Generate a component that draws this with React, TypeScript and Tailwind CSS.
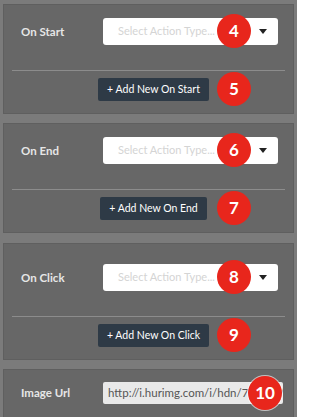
const font = { fontFamily: "Lato, 'Open Sans', sans-serif" };

function Badge({ n, className }: { n: number; className: string }) {
  return (
    <span
      className={`absolute flex h-[34px] w-[34px] items-center justify-center rounded-full bg-[#e8261c] text-[17px] font-bold text-white ${className}`}
    >
      {n}
    </span>
  );
}

function SelectBox() {
  return (
    <div className="flex h-[27px] w-[175px] items-center justify-between rounded-[3px] bg-white pl-[15px] pr-[11px]">
      <span className="text-[11px] text-[#d4d4d4]">Select Action Type...</span>
      <svg width="8" height="5" viewBox="0 0 8 5" className="shrink-0">
        <path d="M0 0h8L4 5z" fill="#222" />
      </svg>
    </div>
  );
}

interface EventPanelProps {
  label: string;
  button: string;
  selectBadge: number;
  buttonBadge: number;
  topPad: string;
  mt: string;
}

function EventPanel({ label, button, selectBadge, buttonBadge, topPad, mt }: EventPanelProps) {
  return (
    <div className={`mx-[3px] ${mt} border border-[#5f5f5f] bg-[#676767] ${topPad} pb-[12px]`}>
      {/* Select row */}
      <div className="relative flex items-center">
        <span className="w-[99px] shrink-0 pl-[17px] text-[11.5px] font-bold text-[#e6e6e6]">{label}</span>
        <SelectBox />
        <Badge n={selectBadge} className="left-[213px] top-[-4px]" />
      </div>

      <div className="mx-[8px] mt-[25px] h-px bg-[#8c8c8c]" />

      {/* Add button row */}
      <div className="relative mt-[7px] flex justify-center pl-[10px]">
        <button className="h-[23px] rounded-[2px] bg-[#2e3a46] px-[9px] text-[10.5px] text-white">
          {button}
        </button>
        <Badge n={buttonBadge} className="left-[213px] top-[-6px]" />
      </div>
    </div>
  );
}

export default function App() {
  const panels: EventPanelProps[] = [
    { label: "On Start", button: "+ Add New On Start", selectBadge: 4, buttonBadge: 5, topPad: "pt-[13px]", mt: "mt-[4px]" },
    { label: "On End", button: "+ Add New On End", selectBadge: 6, buttonBadge: 7, topPad: "pt-[13px]", mt: "mt-[9px]" },
    { label: "On Click", button: "+ Add New On Click", selectBadge: 8, buttonBadge: 9, topPad: "pt-[20px]", mt: "mt-[10px]" },
  ];

  return (
    <div className="h-[417px] w-[297px] overflow-hidden bg-[#7b7b7b]" style={font}>
      {panels.map((p) => (
        <EventPanel key={p.label} {...p} />
      ))}

      {/* Image Url */}
      <div className="mx-[3px] mt-[9px] h-[60px] border border-[#5f5f5f] bg-[#676767] pt-[12px]">
        <div className="relative flex items-center">
          <span className="w-[99px] shrink-0 pl-[17px] text-[11.5px] font-bold text-[#e6e6e6]">Image Url</span>
          <div className="flex h-[22px] w-[180px] items-center overflow-hidden whitespace-nowrap rounded-[2px] bg-[#e9e9e9] pl-[5px] text-[11.5px] text-[#555]">
            http://i.hurimg.com/i/hdn/75/0x0/5
          </div>
          <Badge n={10} className="left-[244px] top-[-6px] ring-1 ring-white/60" />
        </div>
      </div>
    </div>
  );
}
